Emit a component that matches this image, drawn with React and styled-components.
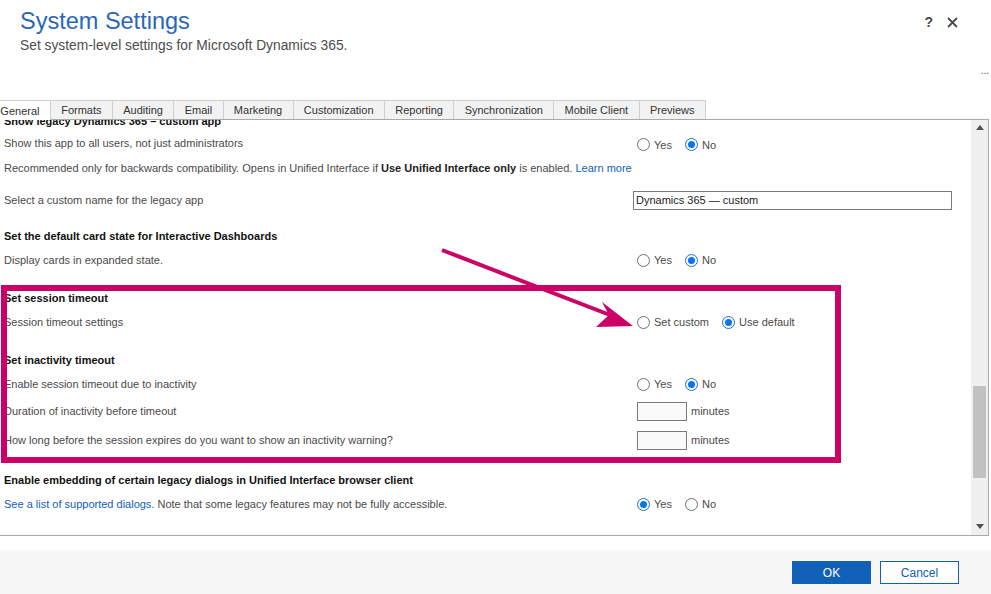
import React from "react";
import styled, { createGlobalStyle } from "styled-components";

const Global = createGlobalStyle`
  html, body { margin: 0; padding: 0; background: #fff; }
  body { font-family: "Liberation Sans", Arial, sans-serif; overflow: hidden; }
  * { box-sizing: border-box; }
`;

const MAGENTA = "#cc0066";
const BLUE = "#1160b7";

const Page = styled.div`
  position: relative;
  width: 991px;
  height: 594px;
  display: flex;
  flex-direction: column;
  overflow: hidden;
`;

const Header = styled.div`
  height: 60px;
  display: flex;
  justify-content: space-between;
  padding: 7px 0 0 20px;
`;

const TitleBlock = styled.div`
  display: flex;
  flex-direction: column;
`;

const Title = styled.h1`
  margin: 0;
  font-size: 23.5px;
  line-height: 28px;
  font-weight: normal;
  color: #2a67b8;
`;

const Subtitle = styled.div`
  margin-top: 2px;
  font-size: 13.8px;
  line-height: 18px;
  color: #4d4d4d;
`;

const HeaderActions = styled.div`
  display: flex;
  align-items: center;
  gap: 14px;
  height: 30px;
  padding-right: 33px;
`;

const HelpMark = styled.span`
  font-size: 14px;
  font-weight: bold;
  color: #4a4a4a;
  line-height: 16px;
`;

const MoreRow = styled.div`
  height: 40px;
  display: flex;
  justify-content: flex-end;
  padding: 3px 2px 0 0;
  font-size: 10px;
  line-height: 16px;
  color: #5a4a8a;
`;

const TabBar = styled.div`
  height: 20px;
  display: flex;
  margin-left: -10px;
  border-bottom: 1px solid #a9a9a9;
  width: 999px;
`;

const Tab = styled.div`
  height: ${(p) => (p.$active ? "20px" : "19px")};
  padding: 0 10.35px;
  display: flex;
  align-items: center;
  font-size: 11px;
  color: #333;
  background: ${(p) => (p.$active ? "#fff" : "#f2f2f2")};
  border: 1px solid #cfcfcf;
  border-bottom: none;
  margin-left: -1px;
  position: relative;
  z-index: ${(p) => (p.$active ? 1 : 0)};
`;

const Panel = styled.div`
  height: 416px;
  width: 989px;
  display: flex;
  border-right: 1px solid #a9a9a9;
  border-bottom: 1px solid #a9a9a9;
  margin-bottom: 14px;
`;

const Scroller = styled.div`
  flex: 1;
  overflow: hidden;
`;

const List = styled.div`
  margin-top: -10px;
  padding-left: 4px;
  display: flex;
  flex-direction: column;
`;

const Row = styled.div`
  height: 22px;
  margin-top: ${(p) => p.$mt || 0}px;
  display: grid;
  grid-template-columns: 629px 1fr;
  align-items: center;
`;

const Heading = styled.div`
  height: 22px;
  margin-top: ${(p) => p.$mt || 0}px;
  display: flex;
  align-items: center;
  font-size: 11px;
  font-weight: bold;
  color: #111;
`;

const Label = styled.div`
  font-size: 11px;
  color: #4a4a4a;
  white-space: nowrap;
  b { color: #222; }
`;

const Link = styled.span`
  color: ${BLUE};
`;

const Controls = styled.div`
  display: flex;
  align-items: center;
  gap: 13px;
  padding-left: ${(p) => (p.$flush ? 0 : 4)}px;
  padding-top: ${(p) => (p.$low ? 3 : 0)}px;
`;

const RadioOption = styled.label`
  display: flex;
  align-items: center;
  gap: 4px;
  font-size: 11px;
  color: #4a4a4a;
`;

const RadioCircle = styled.span`
  width: 13px;
  height: 13px;
  border-radius: 50%;
  border: 1px solid ${(p) => (p.$checked ? "#1a6fe0" : "#6f6f6f")};
  background: #fff;
  display: flex;
  align-items: center;
  justify-content: center;
  &::after {
    content: "";
    width: 7px;
    height: 7px;
    border-radius: 50%;
    background: ${(p) => (p.$checked ? "#0a74f0" : "transparent")};
  }
`;

const TextInput = styled.div`
  width: ${(p) => p.$w}px;
  height: 19px;
  border: 1px solid #7a7a7a;
  background: ${(p) => (p.$empty ? "#fafafa" : "#fff")};
  font-size: 11px;
  color: #222;
  padding: 0 2px;
  display: flex;
  align-items: center;
`;

const Unit = styled.span`
  font-size: 11px;
  color: #4a4a4a;
  margin-left: -9px;
`;

const Scrollbar = styled.div`
  width: 17px;
  background: #f0f0f0;
  display: flex;
  flex-direction: column;
  align-items: center;
  justify-content: space-between;
  padding: 5px 0 6px;
`;

const ScrollTrack = styled.div`
  flex: 1;
  width: 100%;
  display: flex;
  flex-direction: column;
  padding: 0 2px;
`;

const Thumb = styled.div`
  margin-top: 256px;
  height: 92px;
  background: #c1c1c1;
`;

const Footer = styled.div`
  flex: 1;
  background: #f7f7f7;
  display: flex;
  justify-content: flex-end;
  align-items: flex-start;
  gap: 9px;
  padding: 11px 32px 0 0;
`;

const Button = styled.button`
  width: 79px;
  height: 23px;
  font-family: inherit;
  font-size: 12px;
  border: 1px solid ${BLUE};
  background: ${(p) => (p.$primary ? BLUE : "#fff")};
  color: ${(p) => (p.$primary ? "#fff" : BLUE)};
  padding: 0;
`;

const Highlight = styled.div`
  position: absolute;
  left: 1px;
  top: 285px;
  width: 840px;
  height: 178px;
  border: 6px solid ${MAGENTA};
  pointer-events: none;
`;

const Overlay = styled.svg`
  position: absolute;
  left: 0;
  top: 0;
  pointer-events: none;
`;

function Radio({ label, checked }) {
  return (
    <RadioOption>
      <RadioCircle $checked={checked} />
      {label}
    </RadioOption>
  );
}

function YesNo({ yes, low }) {
  return (
    <Controls $low={low}>
      <Radio label="Yes" checked={yes} />
      <Radio label="No" checked={!yes} />
    </Controls>
  );
}

const tabs = [
  "General",
  "Formats",
  "Auditing",
  "Email",
  "Marketing",
  "Customization",
  "Reporting",
  "Synchronization",
  "Mobile Client",
  "Previews",
];

export default function App() {
  return (
    <>
      <Global />
      <Page>
        <Header>
          <TitleBlock>
            <Title>System Settings</Title>
            <Subtitle>Set system-level settings for Microsoft Dynamics 365.</Subtitle>
          </TitleBlock>
          <HeaderActions>
            <HelpMark>?</HelpMark>
            <svg width="11" height="11" viewBox="0 0 11 11">
              <path d="M1 1 L10 10 M10 1 L1 10" stroke="#4a4a4a" strokeWidth="1.8" />
            </svg>
          </HeaderActions>
        </Header>
        <MoreRow>...</MoreRow>
        <TabBar>
          {tabs.map((t, i) => (
            <Tab key={t} $active={i === 0}>
              {t}
            </Tab>
          ))}
        </TabBar>
        <Panel>
          <Scroller>
            <List>
              <Heading>Show legacy Dynamics 365 – custom app</Heading>
              <Row>
                <Label>Show this app to all users, not just administrators</Label>
                <YesNo yes={false} low />
              </Row>
              <Row $mt={3}>
                <Label>
                  Recommended only for backwards compatibility. Opens in Unified Interface if{" "}
                  <b>Use Unified Interface only</b> is enabled. <Link>Learn more</Link>
                </Label>
              </Row>
              <Row $mt={10}>
                <Label>Select a custom name for the legacy app</Label>
                <Controls $flush>
                  <TextInput $w={319}>Dynamics 365 — custom</TextInput>
                </Controls>
              </Row>
              <Heading $mt={14}>Set the default card state for Interactive Dashboards</Heading>
              <Row $mt={2}>
                <Label>Display cards in expanded state.</Label>
                <YesNo yes={false} />
              </Row>
              <Heading $mt={16}>Set session timeout</Heading>
              <Row $mt={2}>
                <Label>Session timeout settings</Label>
                <Controls>
                  <Radio label="Set custom" checked={false} />
                  <Radio label="Use default" checked />
                </Controls>
              </Row>
              <Heading $mt={16}>Set inactivity timeout</Heading>
              <Row $mt={2}>
                <Label>Enable session timeout due to inactivity</Label>
                <YesNo yes={false} />
              </Row>
              <Row $mt={5}>
                <Label>Duration of inactivity before timeout</Label>
                <Controls>
                  <TextInput $w={50} $empty />
                  <Unit>minutes</Unit>
                </Controls>
              </Row>
              <Row $mt={7}>
                <Label>How long before the session expires do you want to show an inactivity warning?</Label>
                <Controls>
                  <TextInput $w={50} $empty />
                  <Unit>minutes</Unit>
                </Controls>
              </Row>
              <Heading $mt={18}>Enable embedding of certain legacy dialogs in Unified Interface browser client</Heading>
              <Row $mt={2}>
                <Label>
                  <Link>See a list of supported dialogs.</Link> Note that some legacy features may not be fully accessible.
                </Label>
                <YesNo yes />
              </Row>
            </List>
          </Scroller>
          <Scrollbar>
            <svg width="8" height="5" viewBox="0 0 8 5">
              <polygon points="0,5 8,5 4,0" fill="#505050" />
            </svg>
            <ScrollTrack>
              <Thumb />
            </ScrollTrack>
            <svg width="8" height="5" viewBox="0 0 8 5">
              <polygon points="0,0 8,0 4,5" fill="#505050" />
            </svg>
          </Scrollbar>
        </Panel>
        <Footer>
          <Button $primary>OK</Button>
          <Button>Cancel</Button>
        </Footer>
        <Highlight />
        <Overlay width="991" height="594" viewBox="0 0 991 594">
          <line x1="442" y1="250" x2="610" y2="315" stroke={MAGENTA} strokeWidth="4" />
          <polygon points="633,326 602,302 609,315 596,327" fill={MAGENTA} />
        </Overlay>
      </Page>
    </>
  );
}
